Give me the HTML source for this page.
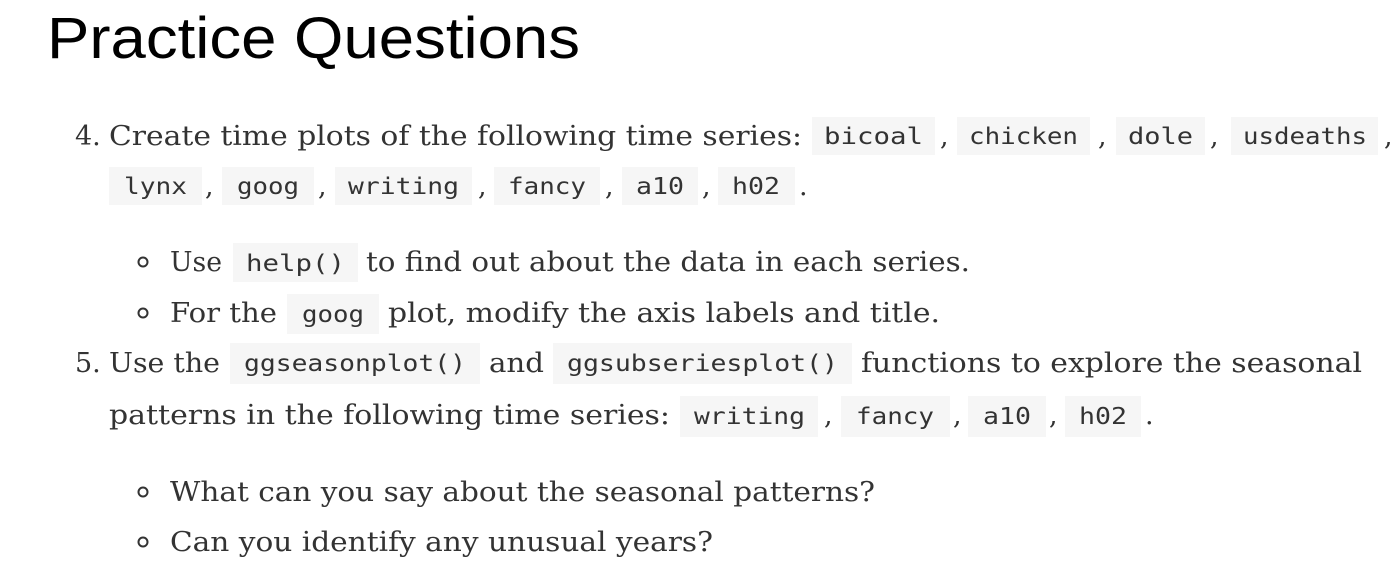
<!DOCTYPE html>
<html><head><meta charset="utf-8"><style>
html,body{margin:0;padding:0;background:#fff;width:1399px;height:582px;overflow:hidden}
.s{font-family:"DejaVu Serif","Liberation Serif",serif;font-size:27px;fill:#333}
.m{font-family:"DejaVu Sans Mono","Liberation Mono",monospace;font-size:23px;fill:#333}
.t{font-family:"Liberation Sans",sans-serif;font-size:58px;fill:#000}
</style></head><body>
<svg width="1399" height="582" xmlns="http://www.w3.org/2000/svg">
<text class="t" x="47" y="58" textLength="533" lengthAdjust="spacingAndGlyphs">Practice Questions</text>
<g fill="#f6f6f6">
<rect x="812" y="117" width="123" height="38"/><rect x="957" y="117" width="133" height="38"/><rect x="1116" y="117" width="89" height="38"/><rect x="1231" y="117" width="147" height="38"/>
<rect x="109" y="167" width="93" height="38"/><rect x="222" y="167" width="92" height="38"/><rect x="335" y="167" width="137" height="38"/><rect x="494" y="167" width="106" height="38"/><rect x="622" y="167" width="76" height="38"/><rect x="718" y="167" width="77" height="38"/>
<rect x="233" y="243" width="125" height="39"/><rect x="287" y="294" width="92" height="40"/>
<rect x="230" y="343" width="250" height="41"/><rect x="553" y="343" width="299" height="41"/>
<rect x="680" y="396" width="138" height="41"/><rect x="841" y="396" width="109" height="41"/><rect x="968" y="396" width="78" height="41"/><rect x="1065" y="396" width="76" height="41"/>
</g>
<g fill="none" stroke="#333" stroke-width="2">
<circle cx="143" cy="262" r="4.5"/><circle cx="143" cy="313" r="4.5"/><circle cx="143" cy="492" r="4.5"/><circle cx="143" cy="542" r="4.5"/>
</g>
<text class="s" x="75" y="145">4.</text>
<text class="s" x="109" y="145" textLength="693" lengthAdjust="spacingAndGlyphs">Create time plots of the following time series:</text>
<text class="m" x="824" y="144" textLength="99" lengthAdjust="spacingAndGlyphs">bicoal</text><text class="s" x="940" y="145">,</text>
<text class="m" x="969" y="144" textLength="109" lengthAdjust="spacingAndGlyphs">chicken</text><text class="s" x="1098" y="145">,</text>
<text class="m" x="1128" y="144" textLength="65" lengthAdjust="spacingAndGlyphs">dole</text><text class="s" x="1210" y="145">,</text>
<text class="m" x="1243" y="144" textLength="124" lengthAdjust="spacingAndGlyphs">usdeaths</text><text class="s" x="1384" y="145">,</text>
<text class="m" x="124" y="194" textLength="63" lengthAdjust="spacingAndGlyphs">lynx</text><text class="s" x="205" y="195">,</text>
<text class="m" x="237" y="194" textLength="62" lengthAdjust="spacingAndGlyphs">goog</text><text class="s" x="318" y="195">,</text>
<text class="m" x="348" y="194" textLength="111" lengthAdjust="spacingAndGlyphs">writing</text><text class="s" x="478" y="195">,</text>
<text class="m" x="508" y="194" textLength="78" lengthAdjust="spacingAndGlyphs">fancy</text><text class="s" x="605" y="195">,</text>
<text class="m" x="636" y="194" textLength="48" lengthAdjust="spacingAndGlyphs">a10</text><text class="s" x="702" y="195">,</text>
<text class="m" x="732" y="194" textLength="48" lengthAdjust="spacingAndGlyphs">h02</text><text class="s" x="799" y="195">.</text>
<text class="s" x="170" y="271" textLength="52" lengthAdjust="spacingAndGlyphs">Use</text>
<text class="m" x="246" y="271" textLength="99" lengthAdjust="spacingAndGlyphs">help()</text>
<text class="s" x="366" y="271" textLength="604" lengthAdjust="spacingAndGlyphs">to find out about the data in each series.</text>
<text class="s" x="170" y="322" textLength="107" lengthAdjust="spacingAndGlyphs">For the</text>
<text class="m" x="302" y="322" textLength="62" lengthAdjust="spacingAndGlyphs">goog</text>
<text class="s" x="388" y="322" textLength="552" lengthAdjust="spacingAndGlyphs">plot, modify the axis labels and title.</text>
<text class="s" x="75" y="372">5.</text>
<text class="s" x="109" y="372" textLength="111" lengthAdjust="spacingAndGlyphs">Use the</text>
<text class="m" x="244" y="371" textLength="222" lengthAdjust="spacingAndGlyphs">ggseasonplot()</text>
<text class="s" x="489" y="372" textLength="55" lengthAdjust="spacingAndGlyphs">and</text>
<text class="m" x="567" y="371" textLength="271" lengthAdjust="spacingAndGlyphs">ggsubseriesplot()</text>
<text class="s" x="861" y="372" textLength="501" lengthAdjust="spacingAndGlyphs">functions to explore the seasonal</text>
<text class="s" x="109" y="424" textLength="561" lengthAdjust="spacingAndGlyphs">patterns in the following time series:</text>
<text class="m" x="694" y="424" textLength="111" lengthAdjust="spacingAndGlyphs">writing</text><text class="s" x="824" y="424">,</text>
<text class="m" x="856" y="424" textLength="78" lengthAdjust="spacingAndGlyphs">fancy</text><text class="s" x="953" y="424">,</text>
<text class="m" x="983" y="424" textLength="48" lengthAdjust="spacingAndGlyphs">a10</text><text class="s" x="1049" y="424">,</text>
<text class="m" x="1079" y="424" textLength="48" lengthAdjust="spacingAndGlyphs">h02</text><text class="s" x="1145" y="424">.</text>
<text class="s" x="170" y="501" textLength="705" lengthAdjust="spacingAndGlyphs">What can you say about the seasonal patterns?</text>
<text class="s" x="170" y="551" textLength="543" lengthAdjust="spacingAndGlyphs">Can you identify any unusual years?</text>
</svg>
</body></html>
